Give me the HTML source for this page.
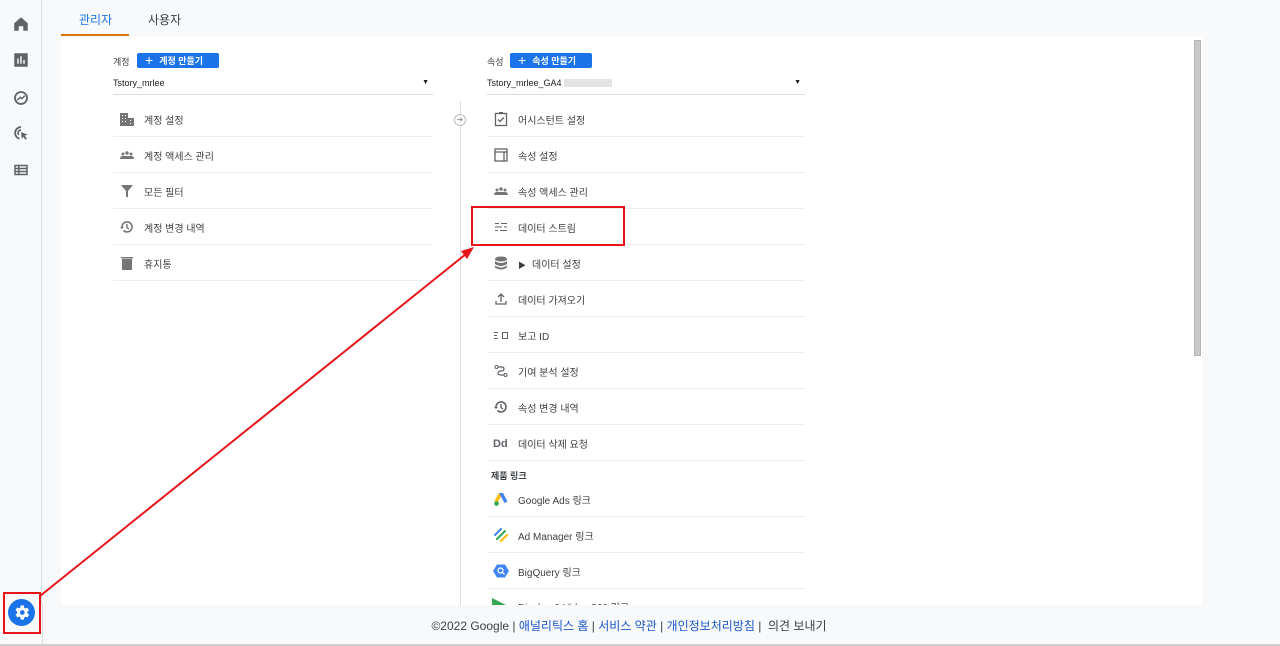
<!DOCTYPE html>
<html><head><meta charset="utf-8"><style>
*{margin:0;padding:0;box-sizing:border-box}
body{width:1280px;height:646px;background:#f8f9fa;font-family:"Liberation Sans","Noto Sans CJK KR",sans-serif;position:relative;overflow:hidden;color:#202124}
.side{position:absolute;left:0;top:0;width:42px;height:644px;border-right:1px solid #dadce0;background:#f8f9fa}
.side svg{position:absolute;left:12px;width:18px;height:18px;fill:#5f6368}
.tab{position:absolute;top:11px;font-size:12px}
.panel{position:absolute;left:61px;top:37px;width:1141px;height:568px;background:#fff}
.a{position:absolute}
.lbl{font-size:9px;color:#3c4043}
.btn{position:absolute;height:15px;background:#1a73e8;border-radius:2px;color:#fff;font-size:9px;font-weight:bold;line-height:15px;padding-left:8px}
.btn b{font-size:14px;font-weight:normal;margin-right:6px;vertical-align:-1px}
.sel{position:absolute;height:18px;border-bottom:1px solid #dadce0;font-size:9px;line-height:12px}
.row{position:absolute;height:36px;border-bottom:1px solid #eceff1;font-size:10px;color:#3c4043;line-height:36px}
.row .ic{position:absolute;left:6px;top:10px;width:16px;height:16px}
.row span.t{position:absolute;left:31px;top:3px}
.foot{position:absolute;top:617px;left:0;width:1258px;text-align:center;font-size:12px;color:#3c4043}
.foot a{color:#1a56c8;text-decoration:none}
</style></head><body>
<div class="side">
<svg style="top:15px" viewBox="0 0 24 24"><path d="M12 3 3 11v10h6v-6h6v6h6V11z"/></svg>
<svg style="top:51px" viewBox="0 0 24 24"><path d="M3 3h18v18H3z M7 10v7h2v-7z M11 7v10h2V7z M15 12v5h2v-5z" fill-rule="evenodd"/></svg>
<svg style="top:89px" viewBox="0 0 24 24"><circle cx="12" cy="12" r="8" fill="none" stroke="#5f6368" stroke-width="2.4"/><path d="M7 15l4-4 2 2 4-4" fill="none" stroke="#5f6368" stroke-width="2"/></svg>
<svg style="top:124px" viewBox="0 0 24 24"><path d="M12 4a8 8 0 0 0-2 15.7" fill="none" stroke="#5f6368" stroke-width="2.4"/><path d="M12 8a4 4 0 0 0-3 6.5" fill="none" stroke="#5f6368" stroke-width="2.2"/><path d="M12 11l9 3-4 1.5 3 4-2 1.5-3-4-2 3z"/></svg>
<svg style="top:161px" viewBox="0 0 24 24"><path d="M3 5h18v14H3z M5 7v2h3V7z M10 7v2h9V7z M5 11v2h3v-2z M10 11v2h9v-2z M5 15v2h3v-2z M10 15v2h9v-2z" fill-rule="evenodd"/></svg>
</div>
<div class="tab" style="left:79px;color:#1a73e8">관리자</div>
<div class="tab" style="left:148px;color:#3c4043">사용자</div>
<div class="a" style="left:61px;top:34px;width:68px;height:2px;background:#e37400"></div>
<div class="panel"></div>
<div class="a" style="left:1194px;top:40px;width:7px;height:316px;background:#c9c9c9;border:1px solid #b5b5b5"></div>

<div class="a lbl" style="left:113px;top:55px">계정</div>
<div class="btn" style="left:137px;top:53px;width:82px"><b>+</b>계정 만들기</div>
<div class="sel" style="left:113px;top:77px;width:320px">Tstory_mrlee<span style="position:absolute;right:4px;font-size:7px">▼</span></div>

<div class="row" style="left:113px;top:101px;width:320px"><svg class="ic" viewBox="0 0 16 16"><path d="M1 2h8v13H1zM9 7h6v8H9z" fill="#757575"/><path d="M3 4h1v1H3zM6 4h1v1H6zM3 7h1v1H3zM6 7h1v1H6zM3 10h1v1H3zM6 10h1v1H6zM11 9h1v1h-1zM11 12h1v1h-1z" fill="#fff"/></svg><span class="t">계정 설정</span></div>
<div class="row" style="left:113px;top:137px;width:320px"><svg class="ic" viewBox="0 0 16 16" fill="#757575"><circle cx="4" cy="7" r="1.5"/><circle cx="8" cy="6" r="1.7"/><circle cx="12" cy="7" r="1.5"/><path d="M1 12q0-3 3-3h8q3 0 3 3z"/></svg><span class="t">계정 액세스 관리</span></div>
<div class="row" style="left:113px;top:173px;width:320px"><svg class="ic" viewBox="0 0 16 16" fill="#757575"><path d="M2 2h12l-5 6v6H7V8z"/></svg><span class="t">모든 필터</span></div>
<div class="row" style="left:113px;top:209px;width:320px"><svg class="ic" viewBox="0 0 16 16"><path d="M3 8a5 5 0 1 1 1.5 3.5" fill="none" stroke="#757575" stroke-width="1.6"/><path d="M1 8h4L3 10z" fill="#757575"/><path d="M8 5v3.5l2 1.5" fill="none" stroke="#757575" stroke-width="1.4"/></svg><span class="t">계정 변경 내역</span></div>
<div class="row" style="left:113px;top:245px;width:320px"><svg class="ic" viewBox="0 0 16 16" fill="#757575"><path d="M3 4h10v11H3zM2 2h12v1.5H2z"/></svg><span class="t">휴지통</span></div>

<div class="a" style="left:460px;top:101px;width:1px;height:504px;background:#dadce0"></div>
<div class="a" style="left:454px;top:114px;width:12px;height:12px;border:1px solid #bdbdbd;border-radius:50%;background:#fff;font-size:8px;line-height:10px;text-align:center;color:#999">➜</div>

<div class="a lbl" style="left:487px;top:55px">속성</div>
<div class="btn" style="left:510px;top:53px;width:82px"><b>+</b>속성 만들기</div>
<div class="sel" style="left:487px;top:77px;width:318px">Tstory_mrlee_GA4 <span style="display:inline-block;width:48px;height:8px;background:#e4e4e4;vertical-align:-1px"></span><span style="position:absolute;right:4px;font-size:7px">▼</span></div>

<div class="row" style="left:487px;top:101px;width:318px"><svg class="ic" viewBox="0 0 16 16"><rect x="2.5" y="2.5" width="11" height="12" fill="none" stroke="#5f6368" stroke-width="1.3"/><path d="M5 8.5l2 2 4-4" fill="none" stroke="#5f6368" stroke-width="1.3"/><rect x="6" y="1" width="4" height="2" fill="#5f6368"/></svg><span class="t">어시스턴트 설정</span></div>
<div class="row" style="left:487px;top:137px;width:318px"><svg class="ic" viewBox="0 0 16 16"><rect x="2" y="2" width="12" height="12" fill="none" stroke="#5f6368" stroke-width="1.3"/><path d="M2 5h12M11 5v9" stroke="#5f6368" stroke-width="1.3"/></svg><span class="t">속성 설정</span></div>
<div class="row" style="left:487px;top:173px;width:318px"><svg class="ic" viewBox="0 0 16 16" fill="#757575"><circle cx="4" cy="7" r="1.5"/><circle cx="8" cy="6" r="1.7"/><circle cx="12" cy="7" r="1.5"/><path d="M1 12q0-3 3-3h8q3 0 3 3z"/></svg><span class="t">속성 액세스 관리</span></div>
<div class="row" style="left:487px;top:209px;width:318px"><svg class="ic" viewBox="0 0 16 16" fill="#5f6368"><path d="M2 4h4v1H2zM8 4h6v1H8zM2 7.5h7v1H2zM11 7.5h3v1h-3zM2 11h3v1H2zM7 11h7v1H7z"/></svg><span class="t">데이터 스트림</span></div>
<div class="row" style="left:487px;top:245px;width:318px"><svg class="ic" viewBox="0 0 16 16" fill="#757575"><ellipse cx="8" cy="4" rx="6" ry="2.5"/><path d="M2 6q6 4 12 0v3q-6 4-12 0zM2 10.5q6 4 12 0v2q-6 4-12 0z"/></svg><span class="t"><span style="font-size:8px;margin-right:6px">▶</span>데이터 설정</span></div>
<div class="row" style="left:487px;top:281px;width:318px"><svg class="ic" viewBox="0 0 16 16"><path d="M8 11V3M5 6l3-3 3 3M3 10v3h10v-3" fill="none" stroke="#5f6368" stroke-width="1.3"/></svg><span class="t">데이터 가져오기</span></div>
<div class="row" style="left:487px;top:317px;width:318px"><svg class="ic" viewBox="0 0 16 16" fill="#5f6368"><path d="M1 5h4v1H1zM1 8h3v1H1zM1 11h4v1H1zM9 5h6v7H9zM10 6v5h4V6z" fill-rule="evenodd"/></svg><span class="t">보고 ID</span></div>
<div class="row" style="left:487px;top:353px;width:318px"><svg class="ic" viewBox="0 0 16 16"><circle cx="3.5" cy="4" r="1.5" fill="none" stroke="#5f6368"/><circle cx="12.5" cy="12" r="1.5" fill="none" stroke="#5f6368"/><path d="M5 4h4q2 0 2 2t-3 2q-3 0-3 2t3 2h3" fill="none" stroke="#5f6368" stroke-width="1.2"/></svg><span class="t">기여 분석 설정</span></div>
<div class="row" style="left:487px;top:389px;width:318px"><svg class="ic" viewBox="0 0 16 16"><path d="M3 8a5 5 0 1 1 1.5 3.5" fill="none" stroke="#5f6368" stroke-width="1.6"/><path d="M1 8h4L3 10z" fill="#5f6368"/><path d="M8 5v3.5l2 1.5" fill="none" stroke="#5f6368" stroke-width="1.4"/></svg><span class="t">속성 변경 내역</span></div>
<div class="row" style="left:487px;top:425px;width:318px"><span style="position:absolute;left:6px;top:1px;font-size:11px;font-weight:bold;color:#5f6368">Dd</span><span class="t">데이터 삭제 요청</span></div>
<div class="a" style="left:491px;top:469px;font-size:9px;font-weight:bold;color:#3c4043">제품 링크</div>
<div class="row" style="left:487px;top:481px;width:318px"><svg class="ic" viewBox="0 0 16 16"><path d="M6 2l-4.5 8 3 1.5L9 4z" fill="#fbbc04"/><path d="M6 2h4l4.5 8.5-3 1.5z" fill="#4285f4"/><circle cx="3.5" cy="12.5" r="2.3" fill="#34a853"/></svg><span class="t">Google Ads 링크</span></div>
<div class="row" style="left:487px;top:517px;width:318px"><svg class="ic" viewBox="0 0 16 16" stroke-width="2" stroke-linecap="round"><path d="M2 8l6-6" stroke="#4285f4"/><path d="M4 12l8-8" stroke="#34a853"/><path d="M8 14l6-6" stroke="#fbbc04"/></svg><span class="t">Ad Manager 링크</span></div>
<div class="row" style="left:487px;top:553px;width:318px"><svg class="ic" viewBox="0 0 16 16"><path d="M4 1.5h8L16 8l-4 6.5H4L0 8z" fill="#4285f4"/><circle cx="7.5" cy="7.5" r="2.5" fill="none" stroke="#fff" stroke-width="1.2"/><path d="M9.5 9.5l2 2" stroke="#fff" stroke-width="1.2"/></svg><span class="t">BigQuery 링크</span></div>
<div class="a" style="left:487px;top:589px;width:318px;height:16px;overflow:hidden;font-size:10px;color:#3c4043"><svg style="position:absolute;left:4px;top:8px" width="16" height="16" viewBox="0 0 16 16"><path d="M1 1l14 7-14 7z" fill="#34a853"/></svg><span style="position:absolute;left:31px;top:10px">Display &amp; Video 360 링크</span></div>

<div class="a" style="left:0;top:605px;width:1280px;height:39px;background:#f8f9fa"></div>
<div class="a" style="left:42px;top:605px;width:1px;height:39px;background:#dadce0"></div>
<div class="a" style="left:0;top:644px;width:1280px;height:2px;background:#d0d0d0"></div>
<div class="foot">©2022 Google | <a>애널리틱스 홈</a> | <a>서비스 약관</a> | <a>개인정보처리방침</a> | &nbsp;의견 보내기</div>

<div class="a" style="left:8px;top:599px;width:27px;height:27px;border-radius:50%;background:#1a73e8"></div>
<svg class="a" style="left:12px;top:603px" width="19" height="19" viewBox="0 0 24 24"><path fill="#fff" d="M19.4 13a7.5 7.5 0 0 0 0-2l2.1-1.6-2-3.5-2.5 1a7 7 0 0 0-1.7-1L15 3h-4l-.4 2.7a7 7 0 0 0-1.7 1l-2.5-1-2 3.5L6.6 11a7.5 7.5 0 0 0 0 2l-2.1 1.6 2 3.5 2.5-1a7 7 0 0 0 1.7 1L11 21h4l.4-2.7a7 7 0 0 0 1.7-1l2.5 1 2-3.5z"/><circle cx="13" cy="12" r="3" fill="#1a73e8"/></svg>

<div class="a" style="left:3px;top:592px;width:38px;height:42px;border:2px solid #e8141a"></div>
<div class="a" style="left:471px;top:206px;width:154px;height:40px;border:2px solid #e8141a"></div>
<svg class="a" style="left:0;top:0" width="1280" height="646"><line x1="40" y1="596" x2="466" y2="254" stroke="#e8141a" stroke-width="2"/><path d="M474 247 L461 251 L467 259 Z" fill="#e8141a"/></svg>
</body></html>
